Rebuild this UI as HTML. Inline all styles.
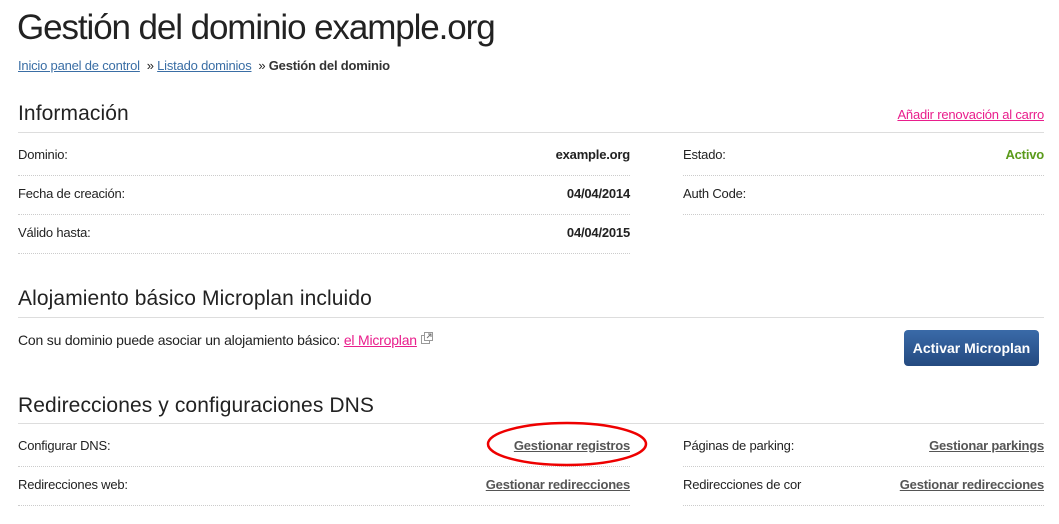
<!DOCTYPE html><html><head><meta charset="utf-8"><style>
body{margin:0;width:1059px;height:524px;overflow:hidden;background:#fff;font-family:"Liberation Sans",sans-serif;color:#222;position:relative}
.a{position:absolute;white-space:nowrap}
.s{font-size:13px;letter-spacing:-0.2px}
.h{font-size:21px;color:#222;letter-spacing:0.1px}
.hr{position:absolute;height:0;border-top:1px solid #ddd}
.dl{position:absolute;height:0;border-top:1px dotted #ccc}
.b{font-weight:bold}
.lk{color:#555;font-weight:bold;text-decoration:underline}
</style></head><body>
<div class="a" style="left:17px;top:8px;font-size:35px;letter-spacing:-1.1px;color:#222">Gestión del dominio example.org</div>
<div class="a s" style="left:18px;top:58px"><span style="color:#3a6ea5;text-decoration:underline">Inicio panel de control</span> &nbsp;» <span style="color:#3a6ea5;text-decoration:underline">Listado dominios</span> &nbsp;» <b style="color:#333">Gestión del dominio</b></div>

<div class="a h" style="left:18px;top:102px">Información</div>
<div class="a s" style="right:15px;top:107px;color:#e91e8c;text-decoration:underline">Añadir renovación al carro</div>
<div class="hr" style="left:18px;width:1026px;top:132px"></div>
<div class="a s" style="left:18px;top:147px">Dominio:</div>
<div class="a s b" style="right:429px;top:147px">example.org</div>
<div class="a s" style="left:683px;top:147px">Estado:</div>
<div class="a s b" style="right:15px;top:147px;color:#5a9a1a">Activo</div>
<div class="dl" style="left:18px;width:612px;top:175px"></div>
<div class="dl" style="left:683px;width:361px;top:175px"></div>
<div class="a s" style="left:18px;top:186px">Fecha de creación:</div>
<div class="a s b" style="right:429px;top:186px">04/04/2014</div>
<div class="a s" style="left:683px;top:186px">Auth Code:</div>
<div class="dl" style="left:18px;width:612px;top:214px"></div>
<div class="dl" style="left:683px;width:361px;top:214px"></div>
<div class="a s" style="left:18px;top:225px">Válido hasta:</div>
<div class="a s b" style="right:429px;top:225px">04/04/2015</div>
<div class="dl" style="left:18px;width:612px;top:253px"></div>

<div class="a h" style="left:18px;top:287px">Alojamiento básico Microplan incluido</div>
<div class="hr" style="left:18px;width:1026px;top:317px"></div>
<div class="a s" style="left:18px;top:332px;font-size:14px">Con su dominio puede asociar un alojamiento básico: <span style="color:#e91e8c;text-decoration:underline">el Microplan</span> <svg width="12" height="12" viewBox="0 0 12 12" style="vertical-align:top"><rect x="0.5" y="3.5" width="8" height="8" fill="#fff" stroke="#999"/><rect x="3.5" y="0.5" width="8" height="8" fill="#fff" stroke="#999"/><path d="M6 6L10 2M7 2h3v3" stroke="#777" fill="none"/></svg></div>
<div class="a" style="left:904px;top:330px;width:135px;height:36px;border-radius:4px;background:linear-gradient(#3a6aa8,#244a80);color:#fff;font-weight:bold;font-size:14px;line-height:36px;text-align:center">Activar Microplan</div>

<div class="a h" style="left:18px;top:394px">Redirecciones y configuraciones DNS</div>
<div class="hr" style="left:18px;width:1026px;top:423px"></div>
<div class="a s" style="left:18px;top:438px">Configurar DNS:</div>
<div class="a s lk" style="right:429px;top:438px">Gestionar registros</div>
<div class="a s" style="left:683px;top:438px">Páginas de parking:</div>
<div class="a s lk" style="right:15px;top:438px">Gestionar parkings</div>
<div class="dl" style="left:18px;width:612px;top:466px"></div>
<div class="dl" style="left:683px;width:361px;top:466px"></div>
<div class="a s" style="left:18px;top:477px">Redirecciones web:</div>
<div class="a s lk" style="right:429px;top:477px">Gestionar redirecciones</div>
<div class="a s" style="left:683px;top:477px;width:119px;overflow:hidden">Redirecciones de correo:</div>
<div class="a s lk" style="right:15px;top:477px">Gestionar redirecciones</div>
<div class="dl" style="left:18px;width:612px;top:505px"></div>
<div class="dl" style="left:683px;width:361px;top:505px"></div>
<svg class="a" style="left:486px;top:421px" width="162" height="46"><ellipse cx="81" cy="23" rx="79" ry="21" fill="none" stroke="#e00" stroke-width="2.5"/></svg>
</body></html>
